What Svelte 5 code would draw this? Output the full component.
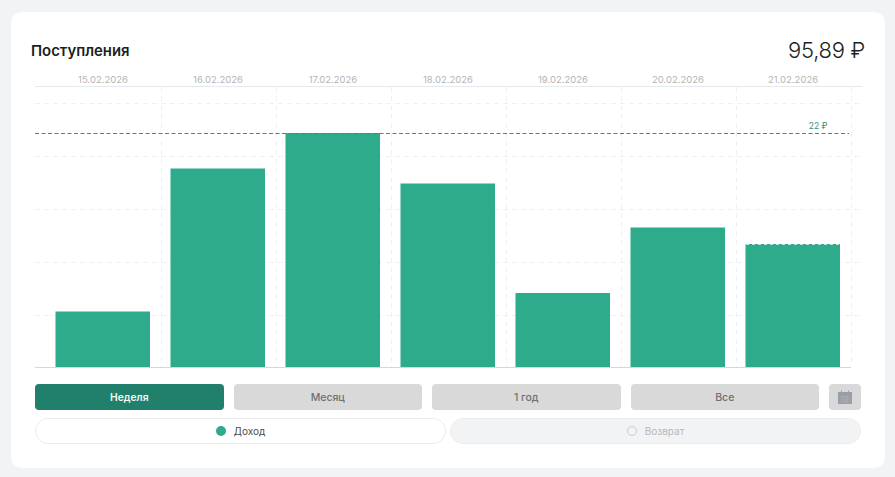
<script>
  const dates = ['15.02.2026','16.02.2026','17.02.2026','18.02.2026','19.02.2026','20.02.2026','21.02.2026'];
  const tops = [241.5, 98.5, 63, 113.5, 223, 157.5, 174];
  const bottom = 297.5;
  const hLines = [33, 86, 139, 192, 245];
  const vLines = [126.5, 241.5, 356.5, 471.5, 586.5, 701.5, 816.5];
  const periods = ['Неделя', 'Месяц', '1 год', 'Все'];
</script>

<main class="page">
  <section class="card">
    <header class="head">
      <h2>Поступления</h2>
      <div class="total">95,89 ₽</div>
    </header>

    <svg class="chart" width="827" height="298" viewBox="0 0 827 298">
      <line x1="0" x2="827" y1="16.5" y2="16.5" class="axis" />
      {#each hLines as y}
        <line x1="0" x2="827" y1={y + 0.5} y2={y + 0.5} class="grid" />
      {/each}
      {#each vLines as x}
        <line x1={x} x2={x} y1="17" y2="297" class="grid" />
      {/each}
      {#each dates as d, i}
        <text x={68 + i * 115} y="13" text-anchor="middle" class="date">{d}</text>
        <rect x={20.5 + i * 115} y={tops[i]} width="94.5" height={bottom - tops[i]} class="bar" />
      {/each}
      <line x1="0" x2="814" y1="63.5" y2="63.5" class="limit" />
      <line x1="711" x2="804" y1="174.5" y2="174.5" class="top-dash" />
      <text x="792.5" y="59" text-anchor="end" class="limit-label">22 ₽</text>
      <line x1="0" x2="816" y1="297.5" y2="297.5" class="axis base" />
    </svg>

    <div class="periods">
      {#each periods as p, i}
        <button class="period" class:active={i === 0}>{p}</button>
      {/each}
      <button class="cal" aria-label="Календарь">
        <svg width="14" height="14" viewBox="0 0 14 14">
          <path d="M3 0.5h1v1.5h6V0.5h1V2h3v12H0V2h3z" fill="#9a9ea6" />
          <path d="M2 6.5h10M2 9h10M2 11.5h10M4.5 5.5v7.5M7 5.5v7.5M9.5 5.5v7.5" stroke="#adb0b6" stroke-width="0.6" fill="none" />
        </svg>
      </button>
    </div>

    <div class="types">
      <div class="type on"><span class="dot"></span>Доход</div>
      <div class="type off"><span class="ring"></span>Возврат</div>
    </div>
  </section>
</main>

<style>
  :global(body) {
    margin: 0;
    background: #f2f3f5;
    font-family: Inter, "Liberation Sans", sans-serif;
  }
  .page {
    padding: 12px 10px 9px 11px;
  }
  .card {
    background: #fff;
    border-radius: 10px;
    height: 456px;
    box-sizing: border-box;
    padding: 24px 20px 0;
  }
  .head {
    display: flex;
    justify-content: space-between;
    align-items: center;
    height: 28px;
  }
  h2 {
    margin: 2px 0 0;
    font-size: 14.9px;
    font-weight: 600;
    color: #1c1f22;
    line-height: 20px;
  }
  .total {
    font-size: 22px;
    font-weight: 300;
    letter-spacing: -0.3px;
    color: #1c1f22;
    line-height: 28px;
  }
  .chart {
    display: block;
    margin: 6px 0 0 4px;
  }
  .axis { stroke: #e8e9eb; stroke-width: 1; }
  .base { stroke: #d6d7da; }
  .grid { stroke: #eff0f1; stroke-width: 1; stroke-dasharray: 5 4; }
  .bar { fill: #2dab8b; }
  .limit { stroke: #3a8f7c; stroke-width: 1; stroke-dasharray: 4 2.5; }
  .top-dash { stroke: #fff; stroke-width: 1; stroke-dasharray: 3 3; opacity: 0.7; }
  .date { font-size: 9.5px; fill: #b4b4b4; }
  .limit-label { font-size: 8.5px; fill: #3a8f7c; }
  .periods {
    display: flex;
    gap: 10px;
    margin: 16px 4px 0;
    height: 26px;
  }
  .period, .cal {
    border: 0;
    padding: 0;
    border-radius: 4px;
    background: #d9d9d9;
    color: #707070;
    font: 500 10.5px Inter, "Liberation Sans", sans-serif;
  }
  .period { flex: 1 1 0; }
  .period.active {
    background: #20806b;
    color: #f4f8f7;
    font-weight: 600;
    font-size: 10.3px;
  }
  .cal {
    width: 32px;
    display: flex;
    align-items: center;
    justify-content: center;
  }
  .types {
    display: flex;
    gap: 4px;
    margin: 8px 4px 0;
    height: 26px;
  }
  .type {
    flex: 1 1 0;
    box-sizing: border-box;
    border: 1px solid #ebecee;
    border-radius: 13px;
    display: flex;
    align-items: center;
    justify-content: center;
    gap: 8px;
    font-size: 10px;
  }
  .on { color: #4a4a4a; background: #fff; }
  .off { color: #b5b7ba; background: #f2f3f5; }
  .dot, .ring {
    width: 10px;
    height: 10px;
    border-radius: 50%;
    box-sizing: border-box;
  }
  .dot { background: #2dab8b; }
  .ring { border: 1px solid #c9cbce; }
</style>
